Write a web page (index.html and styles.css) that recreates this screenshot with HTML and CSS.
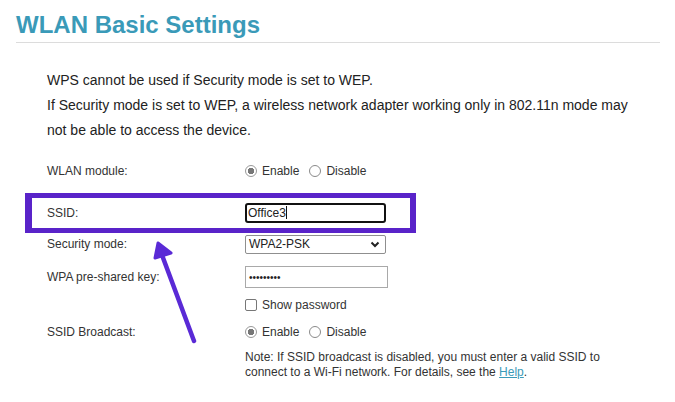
FILE: index.html
```html
<!DOCTYPE html>
<html lang="en">
<head>
<meta charset="utf-8">
<title>WLAN Basic Settings</title>
<link rel="stylesheet" href="styles.css">
</head>
<body>
<div class="page">
  <h1 class="title">WLAN Basic Settings</h1>
  <div class="intro">
    <p>WPS cannot be used if Security mode is set to WEP.</p>
    <p>If Security mode is set to WEP, a wireless network adapter working only in 802.11n mode may not be able to access the device.</p>
  </div>
  <div class="form">
    <div class="row r1">
      <div class="label">WLAN module:</div>
      <div class="ctrl">
        <span class="radio on"></span><span class="opt">Enable</span>
        <span class="radio"></span><span class="opt">Disable</span>
      </div>
    </div>
    <div class="row r2">
      <div class="label">SSID:</div>
      <div class="ctrl">
        <div class="field focus">Office3<span class="caret"></span></div>
      </div>
    </div>
    <div class="row r3">
      <div class="label">Security mode:</div>
      <div class="ctrl">
        <div class="select">
          <span>WPA2-PSK</span>
          <svg class="chev" width="10" height="7" viewBox="0 0 10 7"><path d="M1.5 1.5 L5 5 L8.5 1.5" fill="none" stroke="#222" stroke-width="2"/></svg>
        </div>
      </div>
    </div>
    <div class="row r4">
      <div class="label">WPA pre-shared key:</div>
      <div class="ctrl">
        <div class="field pw">&bull;&bull;&bull;&bull;&bull;&bull;&bull;&bull;&bull;</div>
      </div>
    </div>
    <div class="row r5">
      <div class="label"></div>
      <div class="ctrl">
        <span class="check"></span><span class="opt">Show password</span>
      </div>
    </div>
    <div class="row r6">
      <div class="label">SSID Broadcast:</div>
      <div class="ctrl">
        <span class="radio on"></span><span class="opt">Enable</span>
        <span class="radio"></span><span class="opt">Disable</span>
      </div>
    </div>
    <div class="row note-row">
      <div class="label"></div>
      <div class="note">
        <div>Note: If SSID broadcast is disabled, you must enter a valid SSID to</div>
        <div>connect to a Wi-Fi network. For details, see the <a href="#" class="help">Help</a>.</div>
      </div>
    </div>
  </div>
</div>
<div class="highlight"></div>
<svg class="arrow" width="675" height="402" viewBox="0 0 675 402">
  <line x1="194" y1="341" x2="159" y2="247" stroke="#5a2ad6" stroke-width="4.5" stroke-linecap="round"/>
  <polygon points="158,243 171,253 155,258" fill="#5a2ad6" stroke="#5a2ad6" stroke-width="3" stroke-linejoin="round"/>
</svg>
</body>
</html>
```
FILE: styles.css
```css
html, body {
  margin: 0;
  padding: 0;
  background: #fff;
}
body {
  position: relative;
  width: 675px;
  height: 402px;
  overflow: hidden;
  font-family: "Liberation Sans", Arial, sans-serif;
  color: #333;
}
.page {
  padding: 0 15px 0 16px;
}
.title {
  margin: 0;
  padding: 11px 0 3px 0;
  font-size: 24px;
  line-height: 28px;
  font-weight: bold;
  color: #3a9ab8;
  border-bottom: 1px solid #dcdcdc;
}
.intro {
  padding: 25px 0 0 31px;
  width: 590px;
  font-size: 14px;
  line-height: 25px;
  color: #222;
}
.intro p {
  margin: 0;
}
.form {
  padding-left: 31px;
}
.row {
  display: grid;
  grid-template-columns: 198px 1fr;
  align-items: center;
  font-size: 12px;
}
.r1 { height: 24px; margin-top: 16px; }
.r2 { height: 27px; margin-top: 16px; }
.r3 { height: 24px; margin-top: 6px; }
.r4 { height: 24px; margin-top: 9px; }
.r5 { height: 20px; margin-top: 6px; }
.r6 { height: 20px; margin-top: 7px; }
.note-row { margin-top: 8px; align-items: start; }
.label {
  color: #333;
}
.ctrl {
  display: flex;
  align-items: center;
}
.radio {
  box-sizing: border-box;
  width: 12px;
  height: 12px;
  border: 1px solid #8a8a8a;
  border-radius: 50%;
  background: #fff;
  margin-right: 5px;
}
.radio.on {
  background: radial-gradient(circle, #777 0 3px, #fff 3.5px);
  border-color: #999;
}
.opt {
  margin-right: 10px;
  color: #333;
}
.field {
  box-sizing: border-box;
  width: 141px;
  display: flex;
  align-items: center;
  color: #222;
}
.field.focus {
  height: 20px;
  border: 2px solid #111;
  border-radius: 3px;
  padding-left: 1px;
}
.caret {
  display: inline-block;
  width: 1px;
  height: 13px;
  background: #111;
}
.field.pw {
  width: 143px;
  height: 22px;
  border: 1px solid #a9a9a9;
  padding-left: 3px;
  font-size: 10px;
}
.select {
  box-sizing: border-box;
  width: 141px;
  height: 19px;
  border: 1px solid #8f8f8f;
  border-radius: 2px;
  display: flex;
  align-items: center;
  justify-content: space-between;
  padding: 0 5px 0 3px;
  color: #222;
}
.chev {
  display: block;
}
.check {
  box-sizing: border-box;
  width: 12px;
  height: 12px;
  border: 1px solid #777;
  border-radius: 2px;
  background: #fff;
  margin-right: 5px;
}
.note {
  font-size: 12px;
  line-height: 15px;
  color: #333;
}
.help {
  color: #3a9ab8;
  text-decoration: underline;
}
.highlight {
  position: absolute;
  left: 25px;
  top: 193px;
  width: 378px;
  height: 30px;
  border-style: solid;
  border-color: #5923c9;
  border-width: 5px 6px 5px 7px;
}
.arrow {
  position: absolute;
  left: 0;
  top: 0;
  pointer-events: none;
}
```
